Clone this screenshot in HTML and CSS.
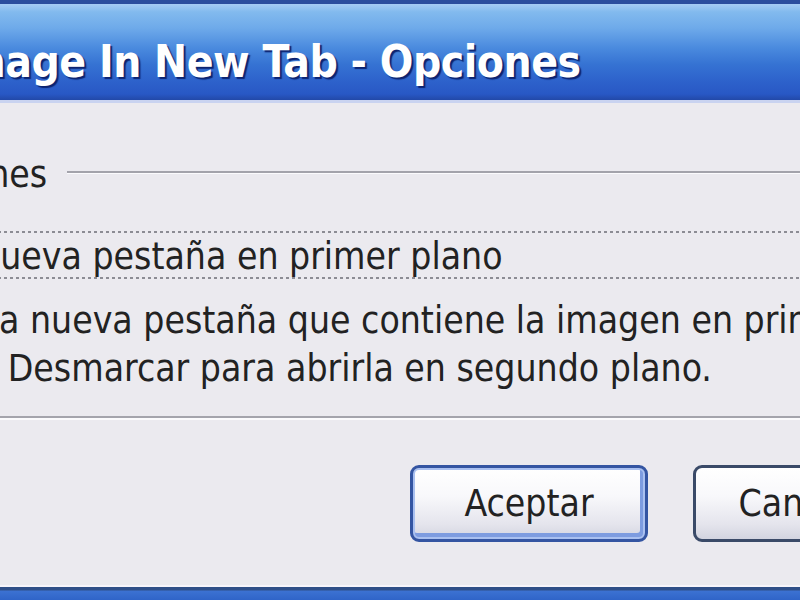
FILE: index.html
```html
<!DOCTYPE html>
<html lang="es">
<head>
    <meta charset="UTF-8">
    <title>Open Image In New Tab - Opciones</title>
    <link rel="stylesheet" href="styles.css">
</head>
<body>
    <div class="window">
        <div class="titlebar">
            <div class="title">Open Image In New Tab - Opciones</div>
        </div>

        <div class="content">
            <div class="group-head">
                <span class="group-label">Opciones</span>
                <span class="group-line"></span>
            </div>

            <div class="option">
                <span class="check"></span>
                <span class="option-label">Abrir nueva pestaña en primer plano</span>
            </div>

            <p class="desc">Abre una nueva pestaña que contiene la imagen en primer<br>plano. Desmarcar para abrirla en segundo plano.</p>

            <div class="separator"></div>

            <div class="buttons">
                <button type="button" class="btn btn-default">Aceptar</button>
                <button type="button" class="btn">Cancelar</button>
            </div>
        </div>

        <div class="frame-bottom"></div>
    </div>
</body>
</html>
```

FILE: styles.css
```css
body {
    margin: 0;
    height: 600px;
    overflow: hidden;
    background-color: #ebeaef;
    font-family: "DejaVu Sans Condensed", "DejaVu Sans", sans-serif;
    color: #222;
}

.window {
    width: 1200px;
    height: 600px;
    margin-left: -200px;
    display: flex;
    flex-direction: column;
}

/* title bar */
.titlebar {
    height: 96px;
    border-top: 4px solid #2b4d9e;
    border-bottom: 3px solid #c9d3f0;
    background: linear-gradient(#a6cbf4 0, #82baee 8px, #6eaaea 24px, #4a8ade 44px, #3673d3 60px, #2d61cb 78px, #2858c5 90px, #2249a8 96px);
}

.title {
    margin: 36px 0 0 22px;
    font-size: 44px;
    line-height: 44px;
    font-weight: bold;
    letter-spacing: -0.5px;
    color: #fff;
    text-shadow: 2px 2px 1px #0c2370;
    white-space: nowrap;
}

.content {
    font-size: 37px;
    flex: 1;
}

/* group header */
.group-head {
    display: flex;
    align-items: center;
    margin-top: 48px;
    line-height: 48px;
}

.group-label {
    padding-left: 93px;
}

.group-line {
    flex: 1;
    height: 2px;
    margin: -6px 0 0 20px;
    background: #a3a3ab;
    border-bottom: 1px solid #fbfbfd;
}

/* checkbox row */
.option {
    display: flex;
    margin-top: 32px;
    padding-top: 4px;
    height: 44px;
    line-height: 44px;
    background:
        repeating-linear-gradient(90deg, #8c8c94 0 3px, transparent 3px 6px) top / 100% 2px no-repeat,
        repeating-linear-gradient(90deg, #8c8c94 0 3px, transparent 3px 6px) bottom / 100% 2px no-repeat;
}

.check {
    width: 40px;
    margin-left: 30px;
}

.option-label {
    padding-left: 18px;
    white-space: nowrap;
}

.desc {
    margin: 18px 0 0 95px;
    text-indent: -26px;
    line-height: 48px;
    white-space: nowrap;
}

.separator {
    margin-top: 23px;
    height: 2px;
    background: #a4a4ac;
    border-bottom: 2px solid #fbfbfd;
}

/* buttons */
.buttons {
    display: flex;
    gap: 45px;
    margin-top: 45px;
    padding-left: 610px;
}

.btn {
    width: 238px;
    height: 77px;
    padding: 0;
    font-family: inherit;
    font-size: 37px;
    color: #222;
    border: 3px solid #3a4a68;
    border-radius: 9px;
    background: linear-gradient(#ffffff 0, #f8f8fb 40%, #e4e4ec 80%, #d2d4e0 100%);
}

.btn-default {
    border-color: #3455a2;
    box-shadow: inset 0 0 0 2px #a9c0f0, inset -2px -3px 0 3px #7d9ce0;
}

.frame-bottom {
    height: 13px;
    border-top: 2px solid #f7f5fb;
    background: linear-gradient(#2f4f88 0, #2f4f88 3px, #3c72d2 4px, #2f64c8 13px);
}
```
